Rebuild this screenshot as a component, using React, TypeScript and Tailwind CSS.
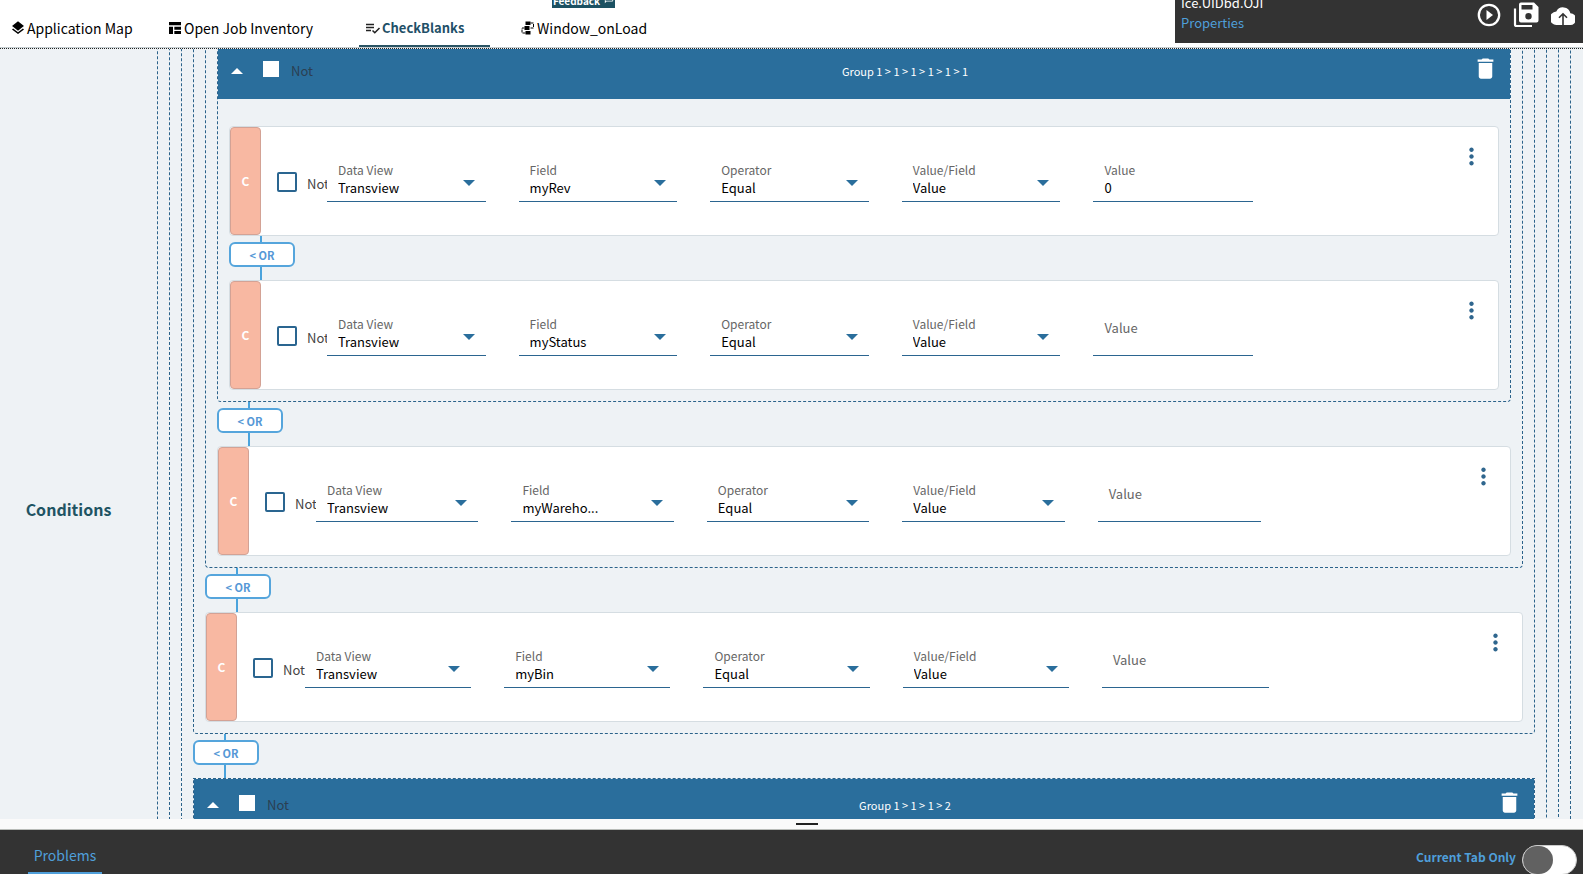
import { useId } from 'react'
import type { ReactNode } from 'react'
import { MdDelete, MdLayers, MdMoreVert, MdOutlineChat } from 'react-icons/md'

type Condition = {
  field: string
  value?: string
}

const Caret = ({ up = false, className = '' }: { up?: boolean; className?: string }) => (
  <svg viewBox="0 0 12 6" className={`h-1.5 w-3 ${className}`} fill="currentColor" aria-hidden="true">
    <path d={up ? 'M0 6L6 0L12 6Z' : 'M0 0L6 6L12 0Z'} />
  </svg>
)

const TableIcon = () => (
  <svg viewBox="0 0 24 24" className="h-4 w-4" fill="currentColor" aria-hidden="true">
    <path d="M3 3h18v5H3zM3 10h6v11H3zM11 10h10v4.500H11zM11 16.500h10V21H11z" />
  </svg>
)

const RuleIcon = () => (
  <svg viewBox="0 0 16 16" className="h-4 w-4" fill="none" stroke="#222222" strokeWidth="1.5" aria-hidden="true">
    <path d="M1 4.500h8M1 7.500h8M1 10.500h5M7.500 10.500l2.300 2.300L14.500 8" />
  </svg>
)

const FlowIcon = () => (
  <svg viewBox="0 0 16 16" className="h-4 w-4" aria-hidden="true">
    <path d="M5.500 1.500h5v3.500h-5zM4.500 6h5v4h-5zM5.500 11h5v3.500h-5z" fill="currentColor" />
    <path d="M10.500 3h3v5H9.500M4.500 8H2v5h3.500" fill="none" stroke="currentColor" strokeWidth="1" strokeDasharray="3 1" />
  </svg>
)

const PlayIcon = () => (
  <svg viewBox="0 0 24 24" className="h-6 w-6" aria-hidden="true">
    <circle cx="12" cy="12" r="10.200" fill="none" stroke="currentColor" strokeWidth="2.300" />
    <path d="M9.500 7L16 12L9.500 17Z" fill="currentColor" />
  </svg>
)

const SaveAllIcon = () => (
  <svg viewBox="0 0 26 26" className="h-[26px] w-[26px]" aria-hidden="true">
    <path
      fill="currentColor"
      fillRule="evenodd"
      d="M8 0.500h13l4.500 4.500v13.500a2 2 0 0 1-2 2H8a2 2 0 0 1-2-2V2.500a2 2 0 0 1 2-2zM8.500 3v4.500h11V3zM15.500 11a3.200 3.200 0 1 0 0 6.400a3.200 3.200 0 0 0 0-6.400z"
    />
    <path fill="none" stroke="currentColor" strokeWidth="2.200" d="M2 6.500v16a1.500 1.500 0 0 0 1.500 1.500H19" />
  </svg>
)

const UploadIcon = () => (
  <svg viewBox="0 0 24 19" className="h-[19px] w-6" aria-hidden="true">
    <path d="M19.400 7.200A7.600 7.600 0 0 0 5.300 5.400A6.800 6.800 0 0 0 6 19h13a5.900 5.900 0 0 0 .4-11.800z" fill="currentColor" />
    <path d="M12 19V8M8 11.800L12 7.800L16 11.800" fill="none" stroke="#333333" strokeWidth="1.600" />
  </svg>
)

function Tab({ icon, label, active = false, className = '' }: { icon: ReactNode; label: string; active?: boolean; className?: string }) {
  return (
    <button
      type="button"
      className={`flex items-center gap-px border-b-2 pt-2.5 ${active ? 'border-[#2b5464] text-[13px] font-bold text-[#1f5068]' : 'border-transparent text-sm text-black'} ${className}`}
    >
      {icon}
      {label}
    </button>
  )
}

function TopBar() {
  return (
    <header className="relative flex h-12 justify-between border-b border-[#c5cdd0] bg-white">
      <nav className="flex h-[47px]">
        <Tab icon={<MdLayers className="h-4 w-4" />} label="Application Map" className="w-[157px] pl-2.5" />
        <Tab icon={<TableIcon />} label="Open Job Inventory" className="w-[202px] pl-2.5" />
        <Tab icon={<RuleIcon />} label="CheckBlanks" active className="w-[131px] pl-1.5" />
        <Tab icon={<FlowIcon />} label="Window_onLoad" className="w-[180px] pl-[30px]" />
      </nav>
      <button
        type="button"
        className="absolute top-0 left-[552px] flex h-2 w-[63px] items-end justify-center gap-1 overflow-hidden bg-[#1c5162] text-[10px] leading-3.5 font-bold text-white"
      >
        Feedback
        <MdOutlineChat className="mb-1 h-2.5 w-2.5" />
      </button>
      <div className="flex h-[43px] w-[408px] justify-between overflow-hidden bg-[#333333] pr-2 pl-1.5 text-[13px]">
        <div className="flex flex-col justify-end pb-2.5 leading-5">
          <span className="text-white">Ice.UIDbd.OJI</span>
          <a href="#properties" className="text-[#4f9fda]">Properties</a>
        </div>
        <div className="flex h-[30px] items-center gap-3 text-white">
          <button type="button" aria-label="Run"><PlayIcon /></button>
          <button type="button" aria-label="Save all"><SaveAllIcon /></button>
          <button type="button" aria-label="Publish"><UploadIcon /></button>
        </div>
      </div>
    </header>
  )
}

function GroupHeader({ title }: { title: string }) {
  const id = useId()
  return (
    <div className="flex h-[54px] items-center bg-[#2a6e9c] pb-0.5 text-white">
      <div className="flex w-[120px] items-center pl-[13px]">
        <button type="button" aria-label="Collapse group"><Caret up /></button>
        <input id={id} type="checkbox" className="mb-1 ml-5 h-4 w-4 appearance-none bg-white" />
        <label htmlFor={id} className="ml-3 text-[13px] text-[#2b3f52]">Not</label>
      </div>
      <span className="flex-1 text-center text-[11px]">{title}</span>
      <button type="button" aria-label="Delete group" className="w-[38px] pb-1.5">
        <MdDelete className="h-[27px] w-[27px]" />
      </button>
    </div>
  )
}

function Group({ title, children }: { title?: string; children: ReactNode }) {
  return (
    <div className="rounded-b border border-dashed border-[#2b628a]">
      {title && <GroupHeader title={title} />}
      <div className={title ? 'px-[11px] pt-[27px] pb-[11px]' : 'px-[11px] pb-[11px]'}>{children}</div>
    </div>
  )
}

function SelectField({ label, value }: { label: string; value: string }) {
  const id = useId()
  return (
    <div className="mr-[33px] border-b border-[#2b6590] text-[#2a6e9c]">
      <label htmlFor={id} className="block pl-[11px] text-xs leading-4 text-[#666666]">{label}</label>
      <div className="relative">
        <select id={id} className="block h-[23px] w-full appearance-none pr-6 pb-[5px] pl-[11px] text-[13px] text-black">
          <option>{value}</option>
        </select>
        <Caret className="pointer-events-none absolute top-0.5 right-[11px]" />
      </div>
    </div>
  )
}

function ValueField({ value }: { value?: string }) {
  const id = useId()
  return (
    <div className="mr-8 border-b border-[#2b6590]">
      <label htmlFor={id} className={`block pl-[11px] text-[#666666] ${value ? 'text-xs leading-4' : 'text-[13px] leading-6'}`}>Value</label>
      <input
        id={id}
        defaultValue={value}
        className={`block w-full pb-1 pl-[11px] text-[13px] text-black outline-none ${value ? 'h-[23px]' : 'h-[15px]'}`}
      />
    </div>
  )
}

function ConditionCard({ field, value }: Condition) {
  const id = useId()
  return (
    <div className="flex h-[110px] rounded border border-[#d5dde2] bg-white">
      <div className="flex w-[31px] items-center justify-center rounded-[4px] border border-[#d3a295] bg-[#f8b8a2] text-xs font-bold text-white">
        C
      </div>
      <div className="mr-[13px] ml-4 grid flex-1 grid-cols-[6fr_repeat(5,23fr)_24fr] items-center pt-0.5">
        <div className="flex min-w-0 items-center overflow-hidden">
          <input id={id} type="checkbox" className="h-5 w-5 shrink-0 appearance-none rounded-xs border-2 border-[#2a6590] bg-white" />
          <label htmlFor={id} className="pt-1 pl-2.5 text-[13px] text-[#444444]">Not</label>
        </div>
        <SelectField label="Data View" value="Transview" />
        <SelectField label="Field" value={field} />
        <SelectField label="Operator" value="Equal" />
        <SelectField label="Value/Field" value="Value" />
        <ValueField value={value} />
        <button type="button" aria-label="Condition menu" className="mt-3.5 self-start justify-self-end text-[#2f668e]">
          <MdMoreVert className="h-[27px] w-[27px]" />
        </button>
      </div>
    </div>
  )
}

function OrConnector() {
  return (
    <div className="flex h-11 w-[66px] flex-col">
      <span className="ml-[31px] h-1.5 w-0.5 bg-[#4aa3dc]" />
      <button type="button" className="h-[25px] rounded-md border-2 border-[#55a5dc] bg-white text-[11px] leading-5 font-bold text-[#5598d6]">
        &lt; OR
      </button>
      <span className="ml-[31px] flex-1 border-l-2 border-[#4aa3dc]" />
    </div>
  )
}

function Conditions() {
  return (
    <section className="flex min-h-0 flex-1 overflow-hidden border-t border-dotted border-[#222222] bg-[#eef2f5]">
      <h2 className="w-[157px] shrink-0 self-center pt-[150px] pr-5 text-center text-base font-bold text-[#1f5463]">Conditions</h2>
      <div className="-mt-2.5 mr-3 min-w-0 flex-1">
        <Group>
          <Group>
            <Group>
              <Group>
                <Group>
                  <Group title="Group 1 > 1 > 1 > 1 > 1 > 1">
                    <ConditionCard field="myRev" value="0" />
                    <OrConnector />
                    <ConditionCard field="myStatus" />
                  </Group>
                  <OrConnector />
                  <ConditionCard field="myWareho..." />
                </Group>
                <OrConnector />
                <ConditionCard field="myBin" />
              </Group>
              <OrConnector />
              <Group title="Group 1 > 1 > 1 > 2">
                <ConditionCard field="myLot" />
              </Group>
            </Group>
          </Group>
        </Group>
      </div>
    </section>
  )
}

function BottomPanel() {
  return (
    <footer>
      <div className="flex h-2.5 items-center justify-center bg-[#fafafa] pl-[30px]">
        <span className="h-0.5 w-[22px] bg-[#222222]" />
      </div>
      <div className="flex h-[45px] justify-between overflow-hidden border-t border-[#b9bcb8] bg-[#333333] pr-1.5 pl-7 text-[#4f9fda]">
        <button type="button" className="flex h-11 w-[74px] items-center justify-center border-b-2 border-[#4f9fda] pt-2 text-sm">
          Problems
        </button>
        <label className="flex items-center gap-1.5 self-start pt-[15px] text-xs font-bold">
          <span className="pb-1.5">Current Tab Only</span>
          <input
            type="checkbox"
            role="switch"
            className="h-[30px] w-[55px] appearance-none rounded-full border border-[#cccccc] bg-white before:block before:h-7 before:w-[30px] before:rounded-full before:bg-[#616161]"
          />
        </label>
      </div>
    </footer>
  )
}

export default function App() {
  return (
    <main className="flex h-screen flex-col overflow-hidden bg-[#f4f6f7] font-['Noto_Sans_CJK_SC','Noto_Sans',sans-serif]">
      <TopBar />
      <Conditions />
      <BottomPanel />
    </main>
  )
}
